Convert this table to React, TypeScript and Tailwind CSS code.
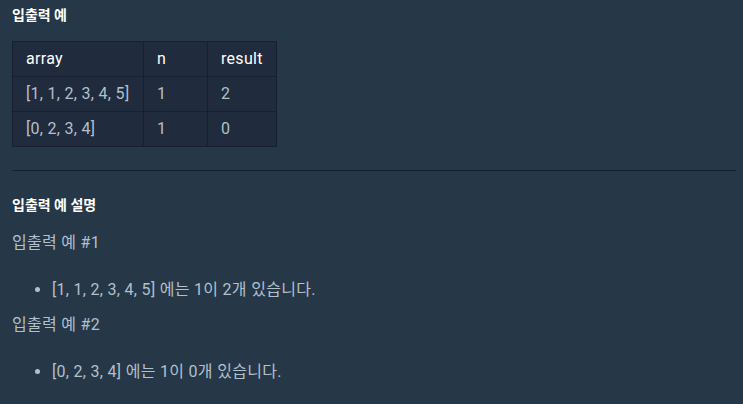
import React from 'react';

const rows = [
  { array: '[1, 1, 2, 3, 4, 5]', n: '1', result: '2' },
  { array: '[0, 2, 3, 4]', n: '1', result: '0' },
];

const examples = [
  { title: '입출력 예 #1', text: '[1, 1, 2, 3, 4, 5] 에는 1이 2개 있습니다.' },
  { title: '입출력 예 #2', text: '[0, 2, 3, 4] 에는 1이 0개 있습니다.' },
];

export default function App() {
  return (
    <div
      className="w-[743px] h-[404px] overflow-hidden bg-[#263747] pl-3 pr-[7px] pt-[5px] text-[#b2c0cc]"
      style={{ fontFamily: 'Roboto, "Noto Sans CJK KR", sans-serif' }}
    >
      <h5 className="text-[14px] leading-[20px] font-bold text-white">입출력 예</h5>

      <table className="mt-[16px] border-collapse bg-[#202b3d] text-[16px] leading-[24px] tracking-[0.3px]">
        <thead>
          <tr className="text-white">
            <th className="w-[131px] border border-[#172030] px-[13px] py-[5px] text-left font-normal">array</th>
            <th className="w-[64px] border border-[#172030] px-[13px] py-[5px] text-left font-normal">n</th>
            <th className="w-[67px] border border-[#172030] px-[13px] py-[5px] text-left font-normal">result</th>
          </tr>
        </thead>
        <tbody>
          {rows.map((row) => (
            <tr key={row.array}>
              <td className="border border-[#172030] px-[13px] py-[5px] whitespace-nowrap">{row.array}</td>
              <td className="border border-[#172030] px-[13px] py-[5px]">{row.n}</td>
              <td className="border border-[#172030] px-[13px] py-[5px]">{row.result}</td>
            </tr>
          ))}
        </tbody>
      </table>

      <hr className="mt-[23px] border-0 border-t border-[#172030]" />

      <h5 className="mt-[24px] text-[14px] leading-[20px] font-bold text-white">입출력 예 설명</h5>

      {examples.map((ex, i) => (
        <div key={ex.title} className={i === 0 ? 'mt-4' : 'mt-[11px]'}>
          <p className="text-[16px] leading-[24px] tracking-[0.3px]">{ex.title}</p>
          <ul className="mt-[23px] list-disc pl-10 text-[16px] leading-[24px] tracking-[0.3px]">
            <li>{ex.text}</li>
          </ul>
        </div>
      ))}
    </div>
  );
}
